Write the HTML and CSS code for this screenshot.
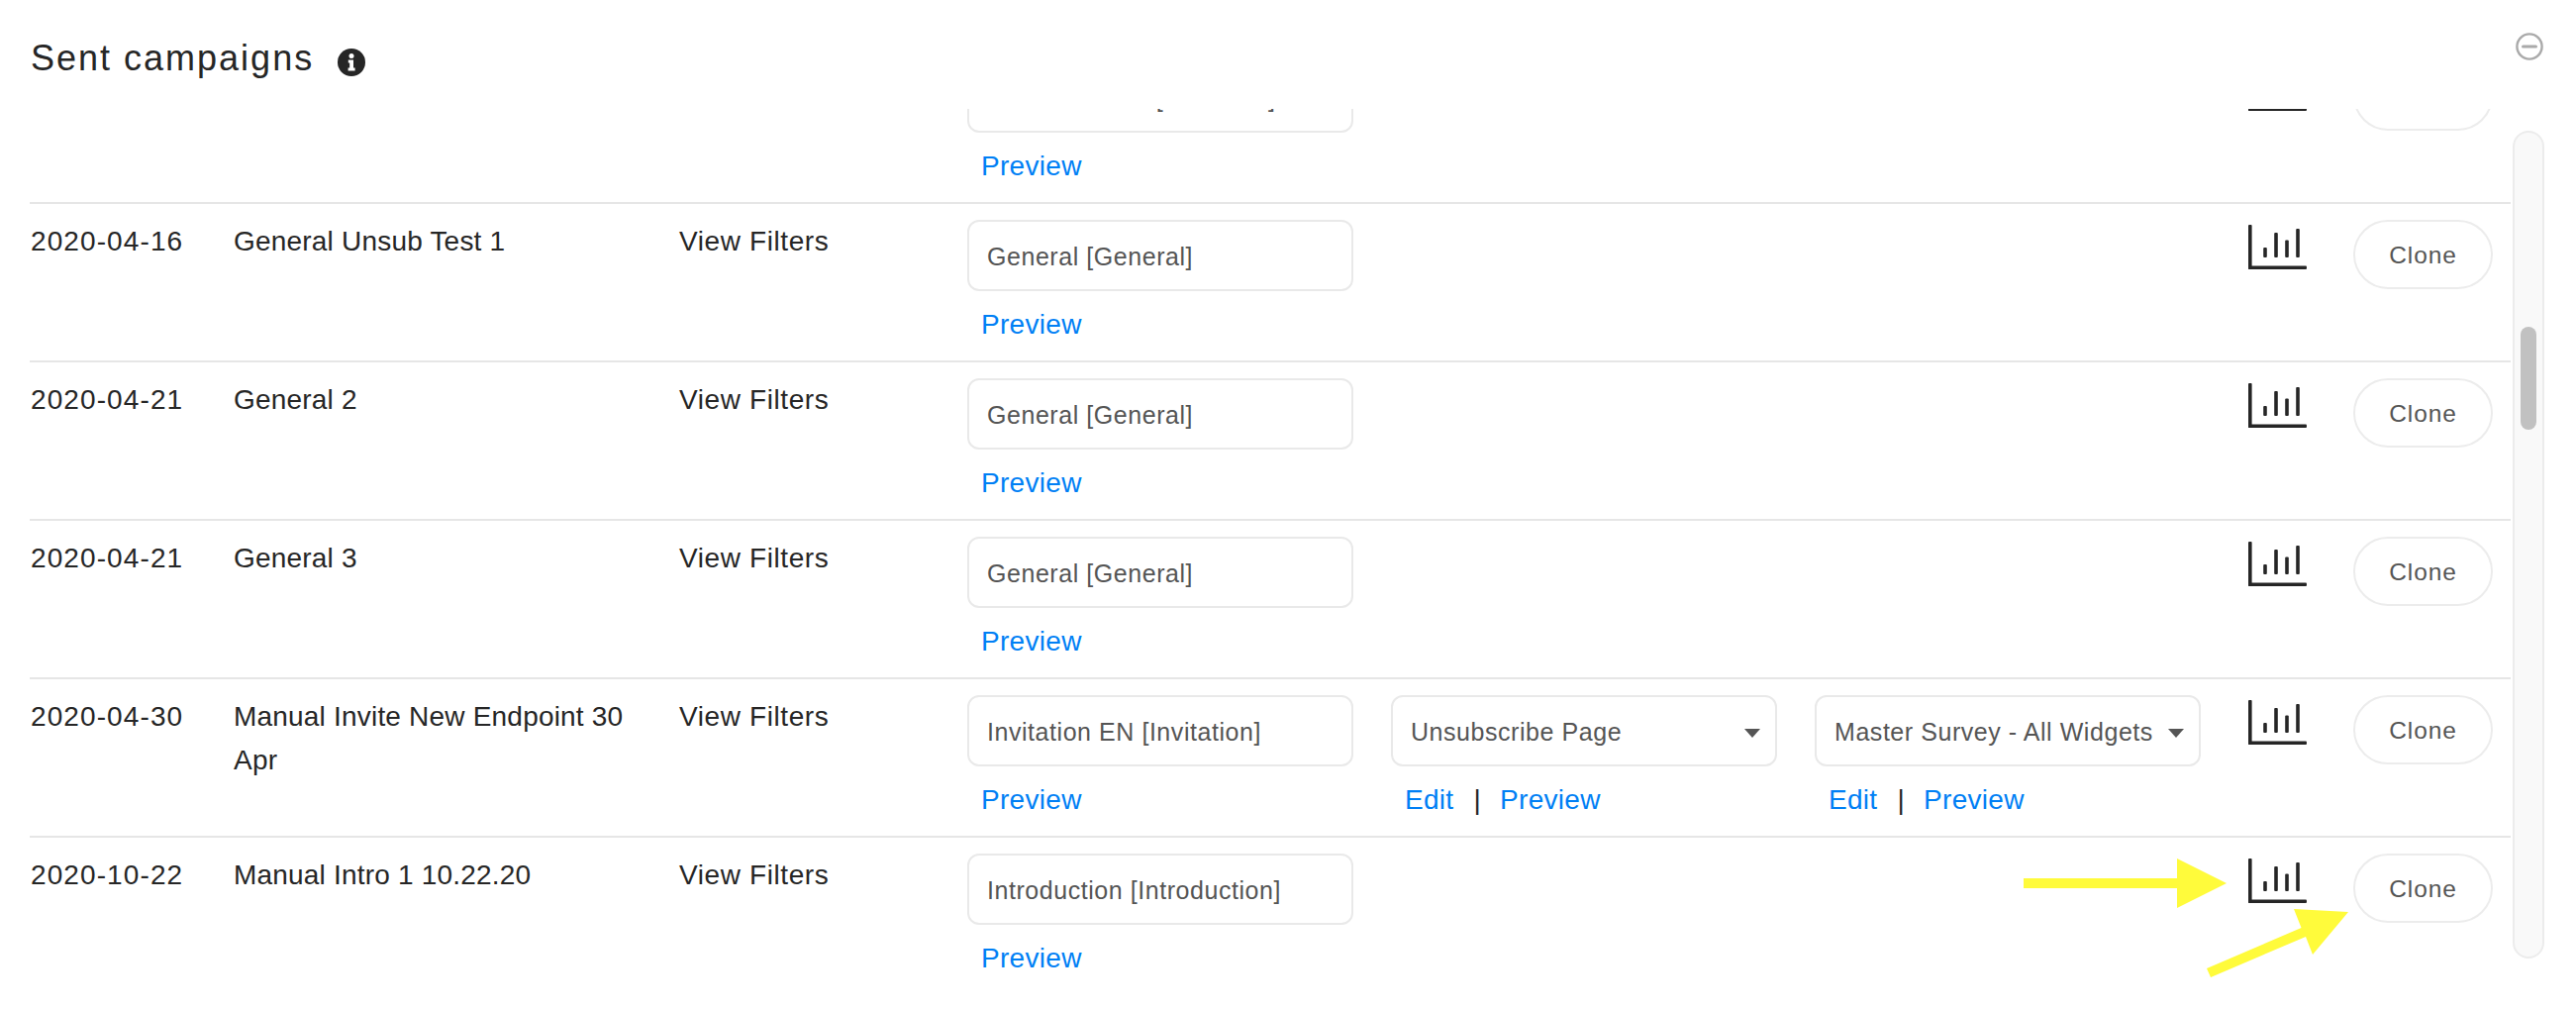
FILE: index.html
```html
<!DOCTYPE html>
<html lang="en">
<head>
<meta charset="utf-8">
<title>Sent campaigns</title>
<link rel="stylesheet" href="styles.css">
</head>
<body>
<div class="page">
  <header class="head">
    <h1 class="title">Sent campaigns</h1>
    <svg class="info" viewBox="0 0 28 28" aria-hidden="true">
      <circle cx="14" cy="14" r="14" fill="#262626"/>
      <circle cx="14" cy="7.6" r="2.5" fill="#fff"/>
      <path d="M10.8 11.6h5.2v8h1.6v3h-7v-3h1.6v-5h-1.4z" fill="#fff"/>
    </svg>
    <svg class="collapse" viewBox="0 0 28 28" aria-hidden="true">
      <circle cx="14" cy="14" r="12.6" fill="none" stroke="#aaa" stroke-width="2.4"/>
      <path d="M7.5 14h13" stroke="#aaa" stroke-width="3" stroke-linecap="round"/>
    </svg>
  </header>
  <div class="body">
    <div class="viewport">
      <div class="list">
        <div class="row">
          <div></div><div></div><div></div>
          <div class="stack"><div class="field">Invitation EN1 [Invitation]</div><div class="links"><a class="link">Preview</a></div></div>
          <div></div><div></div>
          <svg class="chart" viewBox="0 0 59 45" aria-hidden="true"><use href="#chart-icon"/></svg>
          <div class="clone"></div>
        </div>
        <div class="row">
          <div class="cell date">2020-04-16</div>
          <div class="cell name">General Unsub Test 1</div>
          <div class="cell filters">View Filters</div>
          <div class="stack"><div class="field">General [General]</div><div class="links"><a class="link">Preview</a></div></div>
          <div></div><div></div>
          <svg class="chart" viewBox="0 0 59 45" aria-hidden="true"><use href="#chart-icon"/></svg>
          <button class="clone">Clone</button>
        </div>
        <div class="row">
          <div class="cell date">2020-04-21</div>
          <div class="cell name">General 2</div>
          <div class="cell filters">View Filters</div>
          <div class="stack"><div class="field">General [General]</div><div class="links"><a class="link">Preview</a></div></div>
          <div></div><div></div>
          <svg class="chart" viewBox="0 0 59 45" aria-hidden="true"><use href="#chart-icon"/></svg>
          <button class="clone">Clone</button>
        </div>
        <div class="row">
          <div class="cell date">2020-04-21</div>
          <div class="cell name">General 3</div>
          <div class="cell filters">View Filters</div>
          <div class="stack"><div class="field">General [General]</div><div class="links"><a class="link">Preview</a></div></div>
          <div></div><div></div>
          <svg class="chart" viewBox="0 0 59 45" aria-hidden="true"><use href="#chart-icon"/></svg>
          <button class="clone">Clone</button>
        </div>
        <div class="row">
          <div class="cell date">2020-04-30</div>
          <div class="cell name">Manual Invite New Endpoint 30 Apr</div>
          <div class="cell filters">View Filters</div>
          <div class="stack"><div class="field">Invitation EN [Invitation]</div><div class="links"><a class="link">Preview</a></div></div>
          <div class="stack"><div class="field select">Unsubscribe Page</div><div class="links"><a class="link">Edit</a><span class="sep">|</span><a class="link">Preview</a></div></div>
          <div class="stack"><div class="field select">Master Survey - All Widgets</div><div class="links"><a class="link">Edit</a><span class="sep">|</span><a class="link">Preview</a></div></div>
          <svg class="chart" viewBox="0 0 59 45" aria-hidden="true"><use href="#chart-icon"/></svg>
          <button class="clone">Clone</button>
        </div>
        <div class="row">
          <div class="cell date">2020-10-22</div>
          <div class="cell name">Manual Intro 1 10.22.20</div>
          <div class="cell filters">View Filters</div>
          <div class="stack"><div class="field">Introduction [Introduction]</div><div class="links"><a class="link">Preview</a></div></div>
          <div></div><div></div>
          <svg class="chart" viewBox="0 0 59 45" aria-hidden="true"><use href="#chart-icon"/></svg>
          <button class="clone">Clone</button>
        </div>
      </div>
    </div>
    <div class="track"><div class="thumb"></div></div>
  </div>
</div>
<svg class="defs" aria-hidden="true">
  <defs>
    <g id="chart-icon" fill="#262626">
      <rect x="0" y="0" width="3.6" height="45" rx="1"/>
      <rect x="0" y="41.4" width="59" height="3.6" rx="1"/>
      <rect x="15.2" y="23" width="3.6" height="10" rx="1"/>
      <rect x="26.2" y="8" width="3.6" height="25" rx="1"/>
      <rect x="37.2" y="15.5" width="3.6" height="17.5" rx="1"/>
      <rect x="48.2" y="4" width="3.6" height="29" rx="1"/>
    </g>
  </defs>
</svg>
<svg class="arrows" viewBox="0 0 2602 1020" aria-hidden="true">
  <path d="M2044 887H2199V867L2249 892L2199 917V897H2044Z" fill="#fffb3b"/>
  <path d="M2229 978L2324.5 937L2317 918L2372 921L2336 964L2329 946L2233 987Z" fill="#fffb3b"/>
</svg>
</body>
</html>
```
FILE: styles.css
```css
* { box-sizing: border-box; }
html, body { margin: 0; padding: 0; background: #fff; }
body {
  width: 2602px;
  height: 1020px;
  overflow: hidden;
  position: relative;
  font-family: "Liberation Sans", Arial, sans-serif;
  color: #262626;
}
.page { display: flex; flex-direction: column; height: 1020px; }
.head {
  height: 110px;
  flex: none;
  display: flex;
  align-items: flex-start;
  padding-left: 31px;
}
.title {
  margin: 35px 0 0;
  font-size: 36px;
  line-height: 48px;
  font-weight: 400;
  letter-spacing: 2px;
}
.info { width: 28px; height: 28px; margin: 49px 0 0 24px; flex: none; }
.collapse { width: 28px; height: 28px; margin: 33px 33px 0 auto; flex: none; }
.body { flex: 1; display: flex; align-items: flex-start; min-height: 0; height: 910px; }
.viewport { width: 2536px; height: 910px; overflow: hidden; flex: none; }
.list { margin-top: -64px; padding-left: 30px; }
.row {
  height: 160px;
  display: grid;
  grid-template-columns: 207px 450px 290px 428px 428px 438px 106px 141px;
  align-content: start;
  padding-top: 16px;
  border-bottom: 2px solid #e6e6e6;
}
.row:last-child { border-bottom: 0; }
.cell {
  font-size: 28px;
  line-height: 44px;
  margin-top: 0;
}
.date { letter-spacing: 1.1px; padding-left: 1px; }
.name { letter-spacing: 0.2px; padding-right: 20px; margin-left: -1px; }
.filters { letter-spacing: 0.6px; margin-left: -1px; }
.stack { width: 390px; }
.field {
  position: relative;
  height: 72px;
  border: 2px solid #e9e9e9;
  border-radius: 12px;
  padding: 0 18px;
  font-size: 25px;
  line-height: 71px;
  letter-spacing: 0.55px;
  color: #555;
  white-space: nowrap;
  background: #fff;
}
.select::after {
  content: "";
  position: absolute;
  right: 15px;
  top: 32px;
  border-left: 8px solid transparent;
  border-right: 8px solid transparent;
  border-top: 9px solid #555;
}
.links {
  display: flex;
  align-items: center;
  padding-left: 14px;
  margin-top: 16px;
  height: 36px;
  font-size: 28px;
  letter-spacing: 0.3px;
}
.link { color: #007ff5; }
.sep { color: #262626; margin: 0 19px 0 20px; }
.chart { width: 59px; height: 45px; margin-top: 5px; display: block; }
.clone {
  width: 141px;
  height: 70px;
  border: 2px solid #ececec;
  border-radius: 35px;
  background: #fff;
  padding: 2px 0 0;
  font-family: inherit;
  font-size: 24.5px;
  letter-spacing: 0.9px;
  color: #555;
}
.track {
  width: 32px;
  height: 836px;
  margin: 22px 0 0 2px;
  flex: none;
  background: #f9f9f9;
  border: 2px solid #ececec;
  border-radius: 16px;
  padding: 196px 0 0 6px;
}
.thumb { width: 16px; height: 104px; background: #c1c1c1; border-radius: 8px; }
.defs { position: absolute; width: 0; height: 0; }
.arrows { position: absolute; left: 0; top: 0; width: 2602px; height: 1020px; pointer-events: none; }
```
